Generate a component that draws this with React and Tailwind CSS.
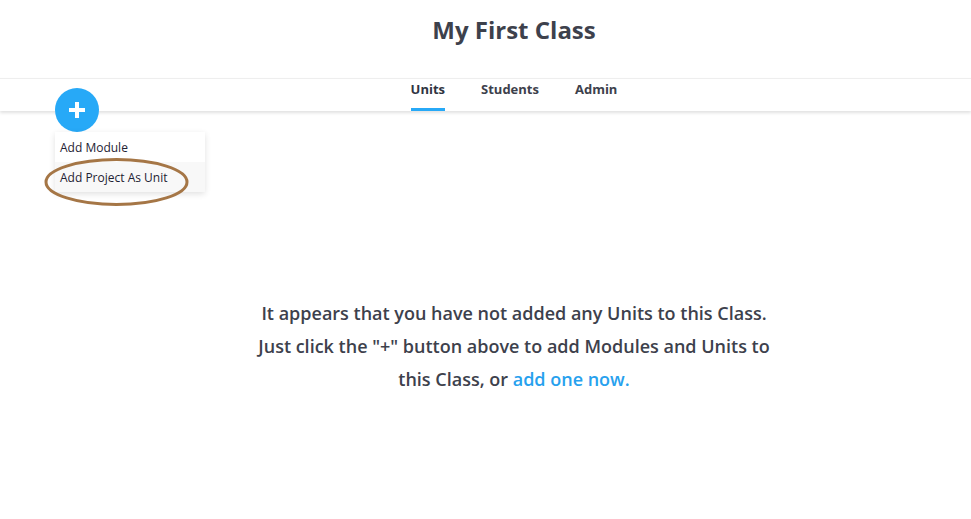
import React from "react";

export default function App() {
  const font = { fontFamily: '"Open Sans", "Noto Sans", sans-serif' };
  return (
    <div className="relative w-full min-h-[519px] bg-white text-[#3d414c]" style={font}>
      <header className="h-[78px] pt-[14px] pl-[57px] flex justify-center">
        <h1 className="text-[24px] leading-[32px] font-bold text-[#3d414c]">My First Class</h1>
      </header>
      <nav className="h-[33px] border-t border-[#eeeeee] shadow-[0_2px_3px_rgba(0,0,0,0.12)] bg-white pl-[57px] flex justify-center gap-[36px]">
        <div className="h-full pt-[1px] border-b-[3px] border-[#27a9f7] text-[13px] leading-[18px] font-bold text-[#2f3442]">Units</div>
        <div className="h-full pt-[1px] text-[13px] leading-[18px] font-bold text-[#3d414c]">Students</div>
        <div className="h-full pt-[1px] text-[13px] leading-[18px] font-bold text-[#3d414c]">Admin</div>
      </nav>
      <main className="pl-[57px] flex justify-center">
        <p className="mt-[186px] w-[526px] text-center text-[18px] leading-[33px] font-semibold text-[#3d414c]">
          It appears that you have not added any Units to this Class. Just click the "+" button above to add Modules and Units to this Class, or{" "}
          <span className="text-[#27a1ee]">add one now.</span>
        </p>
      </main>

      <button className="absolute left-[55px] top-[88px] w-[44px] h-[44px] rounded-full bg-[#27a9f7] flex items-center justify-center">
        <svg width="16" height="16" viewBox="0 0 16 16">
          <rect x="6" y="0" width="4" height="16" fill="#fff" />
          <rect x="0" y="6" width="16" height="4" fill="#fff" />
        </svg>
      </button>
      <div className="absolute left-[55px] top-[132px] w-[150px] bg-white shadow-[0_2px_6px_rgba(0,0,0,0.12)]">
        <div className="h-[30px] pl-[5px] pt-[1px] flex items-center text-[12px] text-[#1e2233]">Add Module</div>
        <div className="h-[30px] pl-[5px] pt-[1px] flex items-center text-[12px] text-[#1e2233] bg-[#f8f8f8]">Add Project As Unit</div>
      </div>
      <svg className="absolute left-[44px] top-[158px]" width="145" height="49" viewBox="0 0 145 49">
        <ellipse cx="72.5" cy="24" rx="70.5" ry="22.5" fill="none" stroke="#a57646" strokeWidth="3" />
      </svg>
    </div>
  );
}
